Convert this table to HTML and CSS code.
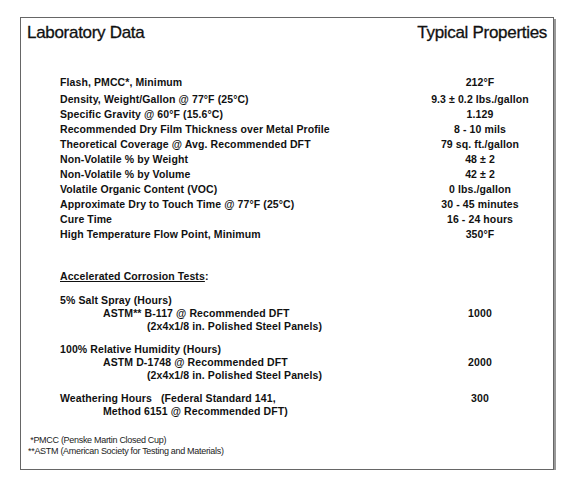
FILE: index.html
```html
<!DOCTYPE html>
<html lang="en">
  <head>
    <meta charset="UTF-8" />
    <title>Laboratory Data</title>
    <link rel="stylesheet" href="styles.css">
  </head>
  <body>
    <article class="sheet">
      <header class="sheet-head">
        <h1>Laboratory Data</h1>
        <h1>Typical Properties</h1>
      </header>

      <div class="props">
        <p class="row first"><span>Flash, PMCC*, Minimum</span><span class="val">212°F</span></p>
        <p class="row"><span>Density, Weight/Gallon @ 77°F (25°C)</span><span class="val">9.3 ± 0.2 lbs./gallon</span></p>
        <p class="row"><span>Specific Gravity @ 60°F (15.6°C)</span><span class="val">1.129</span></p>
        <p class="row"><span>Recommended Dry Film Thickness over Metal Profile</span><span class="val">8 - 10 mils</span></p>
        <p class="row"><span>Theoretical Coverage @ Avg. Recommended DFT</span><span class="val">79 sq. ft./gallon</span></p>
        <p class="row"><span>Non-Volatile % by Weight</span><span class="val">48 ± 2</span></p>
        <p class="row"><span>Non-Volatile % by Volume</span><span class="val">42 ± 2</span></p>
        <p class="row"><span>Volatile Organic Content (VOC)</span><span class="val">0 lbs./gallon</span></p>
        <p class="row"><span>Approximate Dry to Touch Time @ 77°F (25°C)</span><span class="val">30 - 45 minutes</span></p>
        <p class="row"><span>Cure Time</span><span class="val">16 - 24 hours</span></p>
        <p class="row"><span>High Temperature Flow Point, Minimum</span><span class="val">350°F</span></p>
      </div>

      <p class="tests-title"><u>Accelerated Corrosion Tests</u>:</p>

      <div class="test">
        <p class="row"><span>5% Salt Spray (Hours)</span></p>
        <p class="row"><span class="in1">ASTM** B-117 @ Recommended DFT</span><span class="val">1000</span></p>
        <p class="row"><span class="in2">(2x4x1/8 in. Polished Steel Panels)</span></p>
      </div>

      <div class="test">
        <p class="row"><span>100% Relative Humidity (Hours)</span></p>
        <p class="row"><span class="in1">ASTM D-1748 @ Recommended DFT</span><span class="val">2000</span></p>
        <p class="row"><span class="in2">(2x4x1/8 in. Polished Steel Panels)</span></p>
      </div>

      <div class="test">
        <p class="row"><span>Weathering Hours&nbsp;&nbsp;&nbsp;(Federal Standard 141,</span><span class="val">300</span></p>
        <p class="row"><span class="in1">Method 6151 @ Recommended DFT)</span></p>
      </div>

      <footer class="notes">
        <p>&nbsp;*PMCC (Penske Martin Closed Cup)</p>
        <p>**ASTM (American Society for Testing and Materials)</p>
      </footer>
    </article>
  </body>
</html>
```

FILE: styles.css
```css
body {
  margin: 0;
  background: #fff;
  font-family: "Liberation Sans", Arial, sans-serif;
  color: #111;
}

p {
  margin: 0;
}

.sheet {
  box-sizing: border-box;
  width: 534px;
  height: 453px;
  margin: 17px 0 0 20px;
  border: 1px solid #666;
  box-shadow: 2px 2px 0 #999;
  padding: 5px 6px 0 6px;
}

.sheet-head {
  display: flex;
  justify-content: space-between;
}

.sheet-head h1 {
  margin: 0;
  font-size: 17px;
  font-weight: normal;
  letter-spacing: -0.3px;
  -webkit-text-stroke: 0.3px #111;
}

.props {
  margin-top: 32px;
}

.row {
  display: grid;
  grid-template-columns: 1fr 134px;
  padding-left: 33px;
  font-size: 10.5px;
  font-weight: bold;
  letter-spacing: 0.1px;
  line-height: 15px;
  height: 15px;
}

.row.first {
  height: 17px;
}

.val {
  text-align: center;
  grid-column: 2;
}

.in1 {
  padding-left: 43px;
}

.in2 {
  padding-left: 87px;
}

.tests-title {
  margin-top: 27px;
  padding-left: 33px;
  font-size: 10.5px;
  font-weight: bold;
  letter-spacing: 0.1px;
  line-height: 15px;
}

.test {
  margin-top: 10px;
}

.test .row {
  height: 13px;
  line-height: 13px;
}

.notes {
  margin-top: 17px;
  font-size: 9px;
  line-height: 11px;
  letter-spacing: -0.3px;
  color: #222;
  padding-left: 1px;
}
```
